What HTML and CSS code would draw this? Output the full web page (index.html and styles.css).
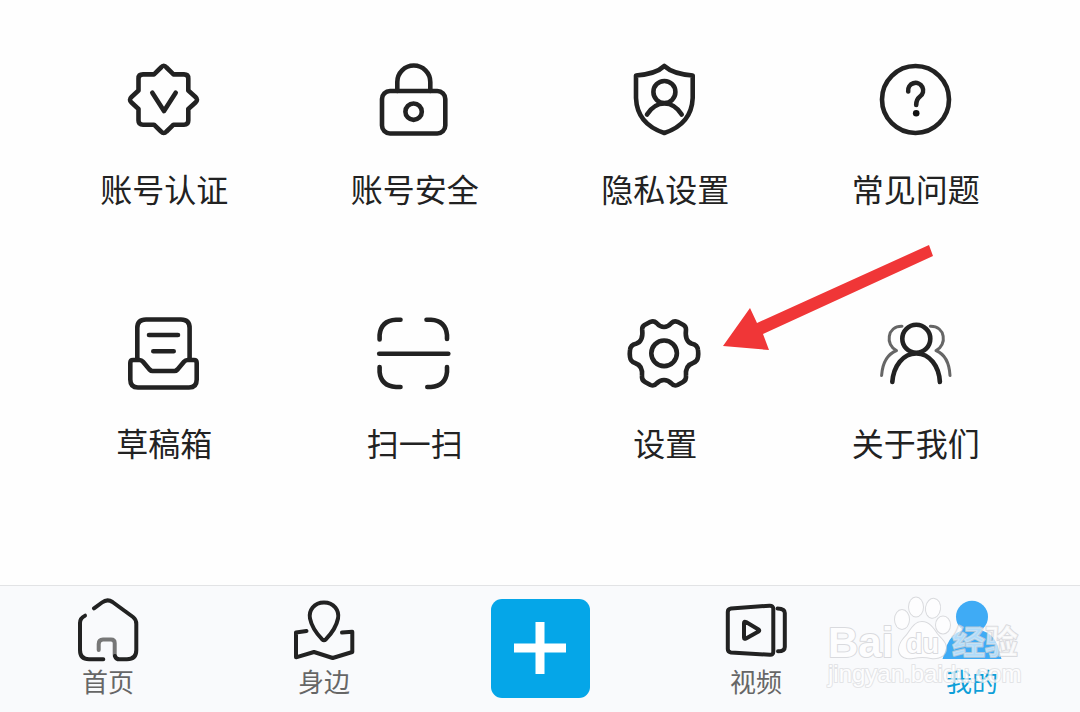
FILE: index.html
```
<!DOCTYPE html>
<html lang="zh-CN">
<head>
<meta charset="UTF-8">
<meta name="viewport" content="width=device-width, initial-scale=1.0">
<title>我的</title>
<link rel="stylesheet" href="styles.css">
</head>
<body>

<main class="menu">
    <a class="item" href="#">
        <svg class="icon" viewBox="0 0 80 80">
            <path d="M37 7.500Q39.700 4 42.500 7.500L49.500 14.400H60Q64.300 14.400 64.300 18.500V30.500L71.500 37Q74.500 39.700 71.500 42.500L64.300 49V60.500Q64.300 64.700 60 64.700H49.500L42.500 71.500Q39.700 74.500 37 71.500L30 64.700H19Q14.500 64.700 14.500 60.500V49L7.500 42.500Q4.500 39.700 7.500 37L14.500 30.500V18.500Q14.500 14.400 19 14.400H30Z"/>
            <path d="M28.300 32.700L40 51L51.700 32.700"/>
        </svg>
        <span>账号认证</span>
    </a>
    <a class="item" href="#">
        <svg class="icon" viewBox="0 0 80 80">
            <rect x="7" y="31" width="63.300" height="42.500" rx="8"/>
            <path d="M22.300 31V22A16.500 16.500 0 0 1 55.300 22V31"/>
            <circle cx="38.600" cy="51.700" r="8.200"/>
        </svg>
        <span>账号安全</span>
    </a>
    <a class="item" href="#">
        <svg class="icon" viewBox="0 0 80 80">
            <path d="M39.300 6Q31 14 11 15.500V38Q12 64 39.300 73Q66.600 64 67.700 38V15.500Q48 14 39.300 6Z"/>
            <circle cx="39.400" cy="32" r="11"/>
            <path d="M22 54.500Q29 43.500 39.400 43.500T56.700 54.500"/>
        </svg>
        <span>隐私设置</span>
    </a>
    <a class="item" href="#">
        <svg class="icon" viewBox="0 0 80 80">
            <circle cx="39.500" cy="39.500" r="33.500"/>
            <path d="M32.200 31.500A7.500 7.500 0 1 1 44 36.500Q40.200 39.500 40.200 45"/>
            <circle class="dot" cx="40.200" cy="53.300" r="3.300"/>
        </svg>
        <span>常见问题</span>
    </a>
    <a class="item" href="#">
        <svg class="icon" viewBox="0 0 80 80">
            <path d="M13.300 45V14Q13.300 5.500 22 5.500H57Q65.600 5.500 65.600 14V45"/>
            <path d="M25 21H54M29.300 37.200H49.700"/>
            <path d="M9 46H15.500Q17.500 46 19 47.800L25.500 55.500Q27 57 28.500 57H50.500Q52 57 53.500 55.500L60 47.800Q61.500 46 63.500 46H70Q72.700 46 72.700 49V65.500Q72.700 73.500 65 73.500H14Q6.300 73.500 6.300 65.500V49Q6.300 46 9 46Z"/>
        </svg>
        <span>草稿箱</span>
    </a>
    <a class="item" href="#">
        <svg class="icon" viewBox="0 0 80 80">
            <path d="M4.600 25.500V21Q6 6.500 21 5.700H25.500M51.500 5.700H56Q70.500 6.500 72 21V25"/>
            <path d="M4.200 39.700H73.300"/>
            <path d="M4.600 53V58Q6 72 21 73H25.500M52.300 73H56Q70.500 72 72 58V53"/>
        </svg>
        <span>扫一扫</span>
    </a>
    <a class="item item-settings" href="#">
        <svg class="icon" viewBox="0 0 80 80">
            <path d="M39 13Q35 13 31.500 9Q29 6.500 25.500 7.800L19.500 11Q17 12.500 17.200 15.500Q18.500 27.500 11 29.800Q5.500 31 5 36Q4.500 39.500 5 43Q5.500 47.500 10 49Q18 51.500 17 62Q16.500 66 20 68L25.500 71Q29 72.500 31.500 69.500Q35 66 39 66T46.500 69.500Q49 72.500 52.500 71L58 68Q61.500 66 61 62Q60 51.500 68 49Q72.500 47.500 73 43Q73.500 39.500 73 36Q72.500 31 67 29.800Q59.500 27.500 61 15.500Q61 12.500 58.500 11L52.500 7.800Q49 6.500 46.500 9Q43 13 39 13Z"/>
            <circle cx="39.100" cy="39.300" r="12.800"/>
        </svg>
        <span>设置</span>
        <svg class="arrow" viewBox="0 0 220 110">
            <path d="M3 102L30 64L37 79L209 1L213 12L43 90L49 106Z"/>
        </svg>
    </a>
    <a class="item" href="#">
        <svg class="icon" viewBox="0 0 80 80">
            <g class="back">
                <path d="M26 12.300C11 12 9 31 20.500 36.500Q7 42 5.600 61.500"/>
                <path d="M54.300 12.300C69.500 12 71.500 31 60 36.500Q73 42 74 61.500"/>
            </g>
            <circle cx="40.300" cy="24.700" r="14"/>
            <path d="M16.300 68C17.500 52 27 39.500 40.300 39.500S63 52 63.900 68"/>
        </svg>
        <span>关于我们</span>
    </a>
</main>

<nav class="tabs">
    <a class="tab" href="#">
        <svg class="tab-icon" viewBox="0 0 64 64">
            <path class="door" d="M22.700 52V46Q22.700 41.500 27 41.500H35Q38.700 41.500 38.700 45V57"/>
            <path d="M9 17.700Q4 20 4 25V52Q4 61.300 13 61.300H27.300"/>
            <path d="M18 10.300L26 4.500Q31.300 .5 36.500 4L57 19Q60.300 21.500 60.300 26V52Q60.300 61.300 51 61.300H43.500Q40 61.300 38.900 58"/>
        </svg>
        <span>首页</span>
    </a>
    <a class="tab" href="#">
        <svg class="tab-icon" viewBox="0 0 64 64">
            <path d="M32 4.500C22 4.500 16.500 12.500 18 20.500C19.500 28 25 36 30 41.200Q32 43 34 41.200C39 36 44.500 28 46 20.500C47.500 12.500 42 4.500 32 4.500Z"/>
            <path d="M14.500 33L4 34.500V59.300L22 54L40.700 60L60.300 54V33.700L50 34.500"/>
        </svg>
        <span>身边</span>
    </a>
    <div class="tab">
        <button class="add" type="button" aria-label="发布">
            <svg class="plus" viewBox="0 0 52 52">
                <path d="M26 0V52M0 26H52"/>
            </svg>
        </button>
    </div>
    <a class="tab" href="#">
        <svg class="tab-icon" viewBox="0 0 64 64">
            <path d="M7 10.500L45.500 7.700Q49.300 7.500 49.300 11V53.500Q49.300 57 46 56.800L7 54.500Q3.800 54 3.800 51V14Q3.800 11 7 10.500Z"/>
            <path d="M53.500 10.500Q60.800 10.500 60.800 15V49Q60.800 53.300 54 53.300"/>
            <path d="M20 25V39.500Q20 41.500 22 40.500L34.500 33.500Q36 32.500 34.500 31.500L22 24Q20 23 20 25Z"/>
        </svg>
        <span>视频</span>
    </a>
    <a class="tab tab-active" href="#">
        <svg class="tab-icon" viewBox="0 0 64 64">
            <circle cx="32" cy="18.700" r="16"/>
            <path d="M22 30H42V32.500Q53 36 57.500 47L61.500 61H2.500L7 47Q11.500 36 22 32.500Z"/>
        </svg>
        <span>我的</span>
    </a>
    <svg class="watermark" viewBox="0 0 210 100">
        <text class="logo" x="2" y="61">Bai</text>
        <ellipse cx="76" cy="23.500" rx="7" ry="9.500"/>
        <ellipse cx="90" cy="11" rx="7" ry="9.500"/>
        <ellipse cx="107" cy="12.300" rx="7" ry="9.500" transform="rotate(8 107 12.300)"/>
        <ellipse cx="117" cy="29" rx="7" ry="8.500"/>
        <path d="M96 26C89 26 86 32 81 39C75 45 73 49 73 54C74 61 80 63 87 62Q97 60 105 62C113 63 120 60 120 52C120 46 115 43 111 38C107 32 103 26 96 26Z"/>
        <text class="du" x="80" y="57">du</text>
        <text class="jingyan" x="126" y="58">经验</text>
        <text class="site" x="2" y="86">jingyan.baidu.com</text>
    </svg>
</nav>

</body>
</html>
```
FILE: styles.css
```
* {
    box-sizing: border-box;
}

body {
    margin: 0;
    min-height: 100vh;
    display: flex;
    flex-direction: column;
    background-color: #fefefe;
    color: #222;
    font-family: "Noto Sans CJK SC", sans-serif;
}

a {
    color: inherit;
    text-decoration: none;
}

svg {
    display: block;
    fill: none;
    stroke: #222;
    stroke-width: 4;
    stroke-linecap: round;
    stroke-linejoin: round;
}

.menu {
    flex: 1;
    display: grid;
    grid-template-columns: repeat(4, 1fr);
    align-content: start;
    row-gap: 106px;
    padding: 60px 39px 40px;
}

.item {
    position: relative;
    display: flex;
    flex-direction: column;
    align-items: center;
    gap: 28px;
    font-size: 32px;
    line-height: 40px;
}

.icon {
    width: 80px;
    height: 80px;
    stroke-width: 4.6;
}

.dot {
    fill: #111;
    stroke: none;
}

.back {
    stroke: #666;
    stroke-width: 3;
}

/* red pointer over the settings entry */
.arrow {
    position: absolute;
    top: -70px;
    left: 180px;
    width: 220px;
    height: 110px;
    fill: #f03637;
    stroke: none;
    z-index: 1;
}

.tabs {
    position: relative;
    display: grid;
    grid-template-columns: repeat(5, 1fr);
    align-items: center;
    border-top: 1px solid #e2e3e5;
    background-color: #f9fafc;
}

.tab {
    display: flex;
    flex-direction: column;
    align-items: center;
    gap: 4px;
    padding: 12px 0 16px;
    color: #666;
    font-size: 26px;
    line-height: 30px;
}

div.tab {
    padding: 12px 0 14px;
}

.tab-icon {
    width: 64px;
    height: 64px;
}

.door {
    stroke: #777;
}

.tab-active {
    color: #0e9fd8;
}

.tab-active .tab-icon {
    fill: #3fabf5;
    stroke: none;
}

.add {
    display: flex;
    align-items: center;
    justify-content: center;
    width: 99px;
    height: 99px;
    padding: 0;
    border: 0;
    border-radius: 11px;
    background-color: #05a6e8;
}

.plus {
    width: 52px;
    height: 52px;
    stroke: #fff;
    stroke-width: 9;
    stroke-linecap: butt;
}

.watermark {
    position: absolute;
    right: 44px;
    bottom: 16px;
    width: 210px;
    height: 100px;
    fill: #fff;
    stroke: #cfd0d4;
    stroke-width: 2;
    paint-order: stroke;
    opacity: 0.75;
    pointer-events: none;
}

.watermark text {
    font-family: "Liberation Sans", "Noto Sans CJK SC", sans-serif;
    font-weight: bold;
}

.watermark .logo {
    font-size: 42px;
}

.watermark .du {
    font-size: 27px;
}

.watermark .jingyan {
    font-size: 33px;
    fill-opacity: 0.8;
}

.watermark .site {
    font-size: 24px;
    font-weight: normal;
    stroke: #dcdde0;
}
```
